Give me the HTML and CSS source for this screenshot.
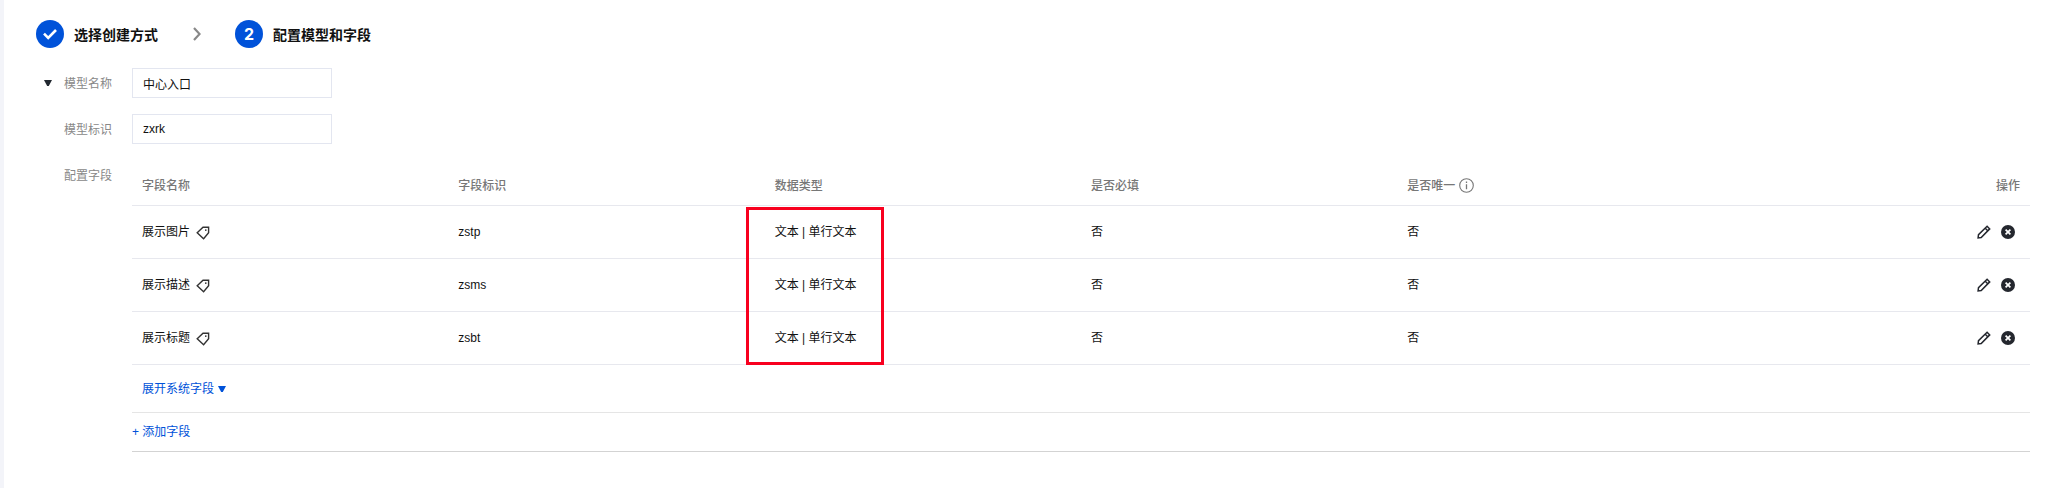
FILE: index.html
```html
<!DOCTYPE html>
<html lang="zh-CN">
<head>
<meta charset="utf-8">
<title>配置模型和字段</title>
<link rel="stylesheet" href="styles.css">
</head>
<body>
<svg class="sprite" aria-hidden="true">
  <symbol id="tag" viewBox="0 0 14 14"><path d="M7 1.2h5.6v5.6l-5 6L1.2 6.8z" fill="none" stroke="currentColor" stroke-width="1.4"/><rect x="9" y="3.4" width="1.5" height="1.5" fill="currentColor"/></symbol>
  <symbol id="pencil" viewBox="0 0 14 14"><path d="M1.1 12.9l.4-3.2 8.6-8.4 2.6 2.6-8.5 8.6zM8.2 3.2l2.6 2.6" fill="none" stroke="currentColor" stroke-width="1.5"/></symbol>
  <symbol id="remove" viewBox="0 0 14 14"><circle cx="7" cy="7" r="7" fill="currentColor"/><path d="M4.6 4.6l4.8 4.8M9.4 4.6L4.6 9.4" stroke="#fff" stroke-width="1.7"/></symbol>
</svg>
<main class="page">
  <ol class="steps">
    <li class="step">
      <span class="step-dot"><svg class="icon-check" viewBox="0 0 16 12"><path d="M2 5.6l4.2 4.2L14 2" fill="none" stroke="#fff" stroke-width="2.6"/></svg></span>
      <span class="step-text">选择创建方式</span>
    </li>
    <li class="step-sep"><svg class="icon-chevron" viewBox="0 0 8 14"><path d="M1 1l5.6 6L1 13" fill="none" stroke="#888" stroke-width="2.2"/></svg></li>
    <li class="step">
      <span class="step-dot">2</span>
      <span class="step-text">配置模型和字段</span>
    </li>
  </ol>
  <form class="form">
    <div class="form-row">
      <button class="toggle" type="button" aria-label="收起"><svg class="icon-caret" viewBox="0 0 8 6"><path d="M0 0h8L4.8 6H3.2z" fill="currentColor"/></svg></button>
      <label class="label" for="model-name">模型名称</label>
      <input class="input" id="model-name" type="text" value="中心入口">
    </div>
    <div class="form-row">
      <label class="label" for="model-id">模型标识</label>
      <input class="input" id="model-id" type="text" value="zxrk">
    </div>
    <div class="form-row form-row-fields">
      <span class="label" id="fields-label">配置字段</span>
      <div class="fields">
        <table class="table" aria-labelledby="fields-label">
          <thead>
            <tr><th>字段名称</th><th>字段标识</th><th>数据类型</th><th>是否必填</th><th><span class="with-icon">是否唯一<svg class="icon-info" viewBox="0 0 15 15"><circle cx="7.5" cy="7.5" r="6.8" fill="none" stroke="currentColor" stroke-width="1.1"/><path d="M7.5 6.2v5M7.5 3.6v1.5" stroke="currentColor" stroke-width="1.3"/></svg></span></th><th class="actions-head">操作</th></tr>
          </thead>
          <tbody>
            <tr><td><span class="with-icon">展示图片<svg class="icon-tag"><use href="#tag"/></svg></span></td><td>zstp</td><td>文本 | 单行文本</td><td>否</td><td>否</td><td><div class="actions"><button type="button" aria-label="编辑"><svg class="icon"><use href="#pencil"/></svg></button><button type="button" aria-label="删除"><svg class="icon"><use href="#remove"/></svg></button></div></td></tr>
            <tr><td><span class="with-icon">展示描述<svg class="icon-tag"><use href="#tag"/></svg></span></td><td>zsms</td><td>文本 | 单行文本</td><td>否</td><td>否</td><td><div class="actions"><button type="button" aria-label="编辑"><svg class="icon"><use href="#pencil"/></svg></button><button type="button" aria-label="删除"><svg class="icon"><use href="#remove"/></svg></button></div></td></tr>
            <tr><td><span class="with-icon">展示标题<svg class="icon-tag"><use href="#tag"/></svg></span></td><td>zsbt</td><td>文本 | 单行文本</td><td>否</td><td>否</td><td><div class="actions"><button type="button" aria-label="编辑"><svg class="icon"><use href="#pencil"/></svg></button><button type="button" aria-label="删除"><svg class="icon"><use href="#remove"/></svg></button></div></td></tr>
          </tbody>
        </table>
        <div class="expand"><button class="link" type="button">展开系统字段<svg class="icon-caret" viewBox="0 0 8 6"><path d="M0 0h8L4.8 6H3.2z" fill="currentColor"/></svg></button></div>
        <div class="add"><button class="link" type="button">+ 添加字段</button></div>
        <div class="highlight"></div>
      </div>
    </div>
  </form>
</main>
</body>
</html>
```
FILE: styles.css
```css
* { box-sizing: border-box; }
body {
  margin: 0;
  background: #fff;
  color: #111;
  font: 12px/18px "Liberation Sans", "Noto Sans CJK SC", sans-serif;
}
.sprite { display: none; }
svg { display: block; flex: none; }
button {
  padding: 0;
  border: 0;
  background: none;
  color: inherit;
  font: inherit;
  cursor: pointer;
}
.page {
  min-height: 100vh;
  border-left: 4px solid #f3f4f9;
  padding: 20px 34px 36px 32px;
}
.steps {
  display: flex;
  align-items: center;
  margin: 0 0 20px;
  padding: 0;
  list-style: none;
  font-size: 14px;
  font-weight: 700;
}
.step { display: flex; align-items: center; gap: 10px; }
.step-text { padding-top: 2px; }
.step-dot {
  display: flex;
  align-items: center;
  justify-content: center;
  width: 28px;
  height: 28px;
  border-radius: 50%;
  background: #0052d9;
  color: #fff;
  font-family: Inter, "Liberation Sans", sans-serif;
  font-size: 16px;
}
.step-sep { padding: 0 34px 0 35px; }
.icon-check { width: 16px; height: 12px; }
.icon-chevron { width: 8px; height: 14px; }
.form { display: flex; flex-direction: column; gap: 16px; padding-left: 28px; }
.form-row { display: flex; align-items: center; position: relative; }
.form-row-fields { align-items: flex-start; padding-top: 6px; }
.toggle { position: absolute; left: -20px; color: #222830; }
.icon-caret { width: 8px; height: 6px; }
.label { flex: none; width: 68px; padding-top: 1px; color: #888; }
.input {
  width: 200px;
  height: 30px;
  padding: 0 10px;
  border: 1px solid #e3e6f0;
  border-radius: 0;
  color: #111;
  font: inherit;
}
.fields { position: relative; flex: 1; min-width: 0; }
.table {
  width: 100%;
  table-layout: fixed;
  border-collapse: separate;
  border-spacing: 0;
  text-align: left;
}
.table th, .table td {
  padding: 0 10px;
  border-bottom: 1px solid #e7e8ee;
}
.table th { height: 40px; color: #777; font-weight: 500; }
.table td { height: 53px; }
.table .actions-head { text-align: right; }
.with-icon { display: flex; align-items: center; gap: 4px; }
.icon-info { width: 15px; height: 15px; }
.icon-tag { width: 14px; height: 14px; margin-top: 2px; margin-left: 2px; color: #333; }
.actions { display: flex; justify-content: flex-end; gap: 10px; padding-right: 5px; color: #24272e; }
.icon { width: 14px; height: 14px; }
.link { display: flex; align-items: center; gap: 4px; color: #0052d9; }
.expand { display: flex; align-items: center; height: 48px; padding: 0 10px; border-bottom: 1px solid #e5e5e5; }
.add { display: flex; align-items: center; height: 39px; border-bottom: 1px solid #d3d3d3; }
.highlight {
  position: absolute;
  top: 41px;
  left: calc(100% / 3 - 19px);
  width: 138px;
  height: 158px;
  border: 3px solid #f8001f;
  pointer-events: none;
}
```
